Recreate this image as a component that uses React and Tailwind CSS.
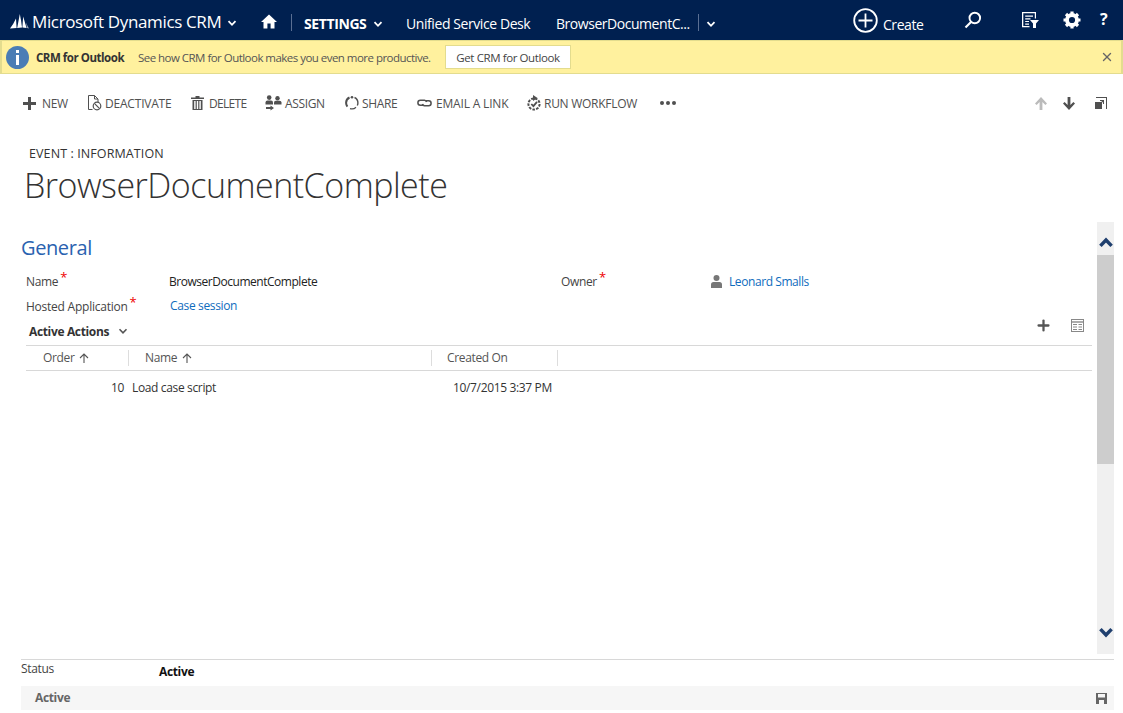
import { Plus, X } from "lucide-react";

const fontStack = { fontFamily: '"Open Sans", "Noto Sans", sans-serif' };

function Chevron({ className = "", size = 10, color = "#fff", sw = 1.8 }) {
  return (
    <svg width={size} height={size} viewBox="0 0 10 10" className={className}>
      <path d="M1.5 3.2 L5 6.8 L8.5 3.2" fill="none" stroke={color} strokeWidth={sw} />
    </svg>
  );
}

function Logo() {
  return (
    <svg width="19" height="15" viewBox="0 0 19 15" fill="#fff">
      <path d="M0 14.5 Q3.5 10 6 4.5 L6.6 14 Z" />
      <path d="M7.2 14 Q8.5 7 9.8 0 Q11.2 6 12 13.6 Z" />
      <path d="M12.4 13.6 Q12.8 7 13.2 2.5 Q15 9 16.6 14 Z" />
      <path d="M16 8.5 Q17.5 12 19 14.5 L17 14 Z" fillOpacity="0.6" />
    </svg>
  );
}

function HomeIcon() {
  return (
    <svg width="16" height="15" viewBox="0 0 16 15" fill="#fff">
      <path d="M8 0.5 L16 8 L13.5 8 L13.5 14.5 L9.6 14.5 L9.6 9.5 L6.4 9.5 L6.4 14.5 L2.5 14.5 L2.5 8 L0 8 Z" />
    </svg>
  );
}

function CreateIcon() {
  return (
    <svg width="25" height="25" viewBox="0 0 25 25" fill="none" stroke="#fff">
      <circle cx="12.5" cy="12.5" r="11.3" strokeWidth="1.8" />
      <path d="M12.5 5.5 V19.5 M5.5 12.5 H19.5" strokeWidth="1.8" />
    </svg>
  );
}

function SearchIcon() {
  return (
    <svg width="18" height="18" viewBox="0 0 18 18" fill="none" stroke="#fff">
      <circle cx="10.8" cy="7" r="5.3" strokeWidth="1.9" />
      <path d="M7 11 L1.5 16.5" strokeWidth="2.2" />
    </svg>
  );
}

function AdvancedFindIcon() {
  return (
    <svg width="17" height="16" viewBox="0 0 17 16" fill="#fff">
      <path d="M0 0 H14 V6.5 H12.8 V1.3 H1.3 V14 H7.5 V15.3 H0 Z" />
      <path d="M3.2 3.5 H11 V4.7 H3.2 Z M3.2 6.2 H8.5 V7.4 H3.2 Z M3.2 8.9 H7 V10.1 H3.2 Z M3.2 11.6 H7 V12.8 H3.2 Z" />
      <path d="M8 8 H17 L14 11.5 V16 H11 V11.5 Z" />
    </svg>
  );
}

function GearIcon({ color = "#fff" }) {
  return (
    <svg width="18" height="18" viewBox="0 0 18 18">
      <circle cx="9" cy="9" r="5" fill="none" stroke={color} strokeWidth="3.8" />
      <path
        d="M9 0.5 V3 M9 15 V17.5 M0.5 9 H3 M15 9 H17.5 M3 3 L4.8 4.8 M13.2 13.2 L15 15 M15 3 L13.2 4.8 M4.8 13.2 L3 15"
        stroke={color}
        strokeWidth="3.2"
      />
    </svg>
  );
}

function InfoIcon() {
  return (
    <svg width="23" height="23" viewBox="0 0 23 23">
      <circle cx="11.5" cy="11.5" r="11.5" fill="#4a7db5" />
      <rect x="10" y="4" width="3" height="3" fill="#fff" />
      <rect x="10" y="9" width="3" height="10" fill="#fff" />
    </svg>
  );
}

const iconGray = "#505050";

function NewIcon() {
  return (
    <svg width="13" height="13" viewBox="0 0 13 13" fill={iconGray}>
      <path d="M5 0 H8 V5 H13 V8 H8 V13 H5 V8 H0 V5 H5 Z" />
    </svg>
  );
}

function DeactivateIcon() {
  return (
    <svg width="14" height="16" viewBox="0 0 14 16" fill="none" stroke={iconGray} strokeWidth="1">
      <path d="M4.5 14.5 H0.5 V0.5 H6.5 L10 4 V7 M6.5 0.5 V4 H10" />
      <circle cx="9" cy="11" r="3.8" strokeWidth="1.2" />
      <path d="M6.4 8.4 L11.6 13.6" strokeWidth="1.2" />
    </svg>
  );
}

function DeleteIcon() {
  return (
    <svg width="13" height="14" viewBox="0 0 13 14" fill={iconGray}>
      <path d="M0 1.5 H13 V3 H0 Z M4.5 0 H8.5 V1.5 H4.5 Z" />
      <path d="M1.5 4 H11.5 V14 H1.5 Z M3.2 5 V13 H4.6 V5 Z M5.8 5 V13 H7.2 V5 Z M8.4 5 V13 H9.8 V5 Z" fillRule="evenodd" />
    </svg>
  );
}

function AssignIcon() {
  return (
    <svg width="17" height="16" viewBox="0 0 17 16" fill={iconGray}>
      <circle cx="4.2" cy="2.6" r="2.3" />
      <path d="M0.5 9.5 V7.5 Q0.5 5.5 2.5 5.5 H6 Q8 5.5 8 7.5 V9.5 Z" />
      <circle cx="12.5" cy="3.2" r="2.2" />
      <path d="M9 9.5 V7.5 Q9 5.8 10.8 5.8 H14.5 Q16.5 5.8 16.5 7.5 V9.5 Z" />
      <path d="M1 12 H5.5 V10.4 L9 12.9 L5.5 15.5 V13.9 H1 Z" />
    </svg>
  );
}

function ShareIcon() {
  return (
    <svg width="14" height="14" viewBox="0 0 14 14" fill="none" stroke={iconGray}>
      <path d="M4.5 1.5 A5.9 5.9 0 0 0 1.1 7 A5.9 5.9 0 0 0 2.4 10.6" strokeWidth="2" />
      <path d="M5 12.6 A5.9 5.9 0 0 0 11 11.3" strokeWidth="1.2" />
      <path d="M9.5 1.5 A5.9 5.9 0 0 1 12.9 7 A5.9 5.9 0 0 1 12.3 9.5" strokeWidth="1.4" />
      <circle cx="7" cy="1.3" r="1.3" fill={iconGray} stroke="none" />
    </svg>
  );
}

function LinkIcon() {
  return (
    <svg width="15" height="8" viewBox="0 0 15 8" fill="none" stroke={iconGray} strokeWidth="1.5">
      <path d="M6.5 6.2 H3.4 A2.4 2.4 0 0 1 3.4 1.2 H7.5 A2.4 2.4 0 0 1 9.6 3" />
      <path d="M8.5 1.8 H11.6 A2.4 2.4 0 0 1 11.6 6.8 H7.5 A2.4 2.4 0 0 1 5.4 5" />
    </svg>
  );
}

function WorkflowIcon() {
  return (
    <svg width="14" height="16" viewBox="0 0 14 16" fill="none" stroke={iconGray}>
      <circle cx="7" cy="9" r="5.6" strokeWidth="2" strokeDasharray="2.6 1.2" />
      <path d="M6 0 L10.5 3 L6 6 Z" fill={iconGray} stroke="none" />
      <path d="M4.3 9 L6.4 11.2 L10 6.9" strokeWidth="1.8" />
    </svg>
  );
}

function ArrowIcon({ up = false, color = iconGray }) {
  return (
    <svg width="12" height="13" viewBox="0 0 12 13" fill={color} className={up ? "" : "rotate-180"}>
      <path d="M6 0 L12 6.5 L10.4 8 L7.4 5 V13 H4.6 V5 L1.6 8 L0 6.5 Z" />
    </svg>
  );
}

function PopoutIcon() {
  return (
    <svg width="12" height="12" viewBox="0 0 12 12" fill={iconGray}>
      <path d="M1 0 H12 V12 H11 V1 H1 Z" />
      <path d="M0 5 H7 V12 H0 Z" />
      <path d="M5 3 H9 V7 H8 V4.8 L6.2 6.6 L5.4 5.8 L7.2 4 H5 Z" />
    </svg>
  );
}

function SortArrow() {
  return (
    <svg width="10" height="10" viewBox="0 0 10 10" fill="none" stroke="#555" strokeWidth="1.1">
      <path d="M5 10 V1 M1 5 L5 1 L9 5" />
    </svg>
  );
}

function GridIcon() {
  return (
    <svg width="13" height="13" viewBox="0 0 13 13" fill="none" stroke="#888">
      <rect x="0.5" y="0.5" width="12" height="12" />
      <path d="M0.5 3 H12.5" strokeWidth="1.4" />
      <path d="M2 5.5 H6 M7.5 5.5 H11 M2 8 H6 M7.5 8 H11 M2 10.5 H6 M7.5 10.5 H11" />
    </svg>
  );
}

function SaveIcon() {
  return (
    <svg width="11" height="11" viewBox="0 0 11 11" fill="#666">
      <path d="M0 0 H11 V11 H0 Z M2 1 V4.5 H9 V1 Z M3 7 V11 H8 V7 Z" fillRule="evenodd" />
    </svg>
  );
}

function PersonIcon() {
  return (
    <svg width="11" height="13" viewBox="0 0 11 13" fill="#777">
      <circle cx="5.5" cy="3" r="3" />
      <path d="M0 13 V9.5 Q0 7 2.5 7 H8.5 Q11 7 11 9.5 V13 Z" />
    </svg>
  );
}

const commands = [
  { label: "NEW", icon: <NewIcon />, cls: "w-[65px]", iconCls: "w-[19px]", track: "" },
  { label: "DEACTIVATE", icon: <DeactivateIcon />, cls: "w-[103px]", iconCls: "w-[17px]", track: "tracking-[-0.2px]" },
  { label: "DELETE", icon: <DeleteIcon />, cls: "w-[74px]", iconCls: "w-[18px]", track: "tracking-[-0.7px]" },
  { label: "ASSIGN", icon: <AssignIcon />, cls: "w-[80px]", iconCls: "w-[20px]", track: "" },
  { label: "SHARE", icon: <ShareIcon />, cls: "w-[72px]", iconCls: "w-[17px]", track: "" },
  { label: "EMAIL A LINK", icon: <LinkIcon />, cls: "w-[110px]", iconCls: "w-[19px]", track: "tracking-[-0.18px]" },
  { label: "RUN WORKFLOW", icon: <WorkflowIcon />, cls: "w-[133px]", iconCls: "w-[17px]", track: "tracking-[-0.28px]" },
];

function Required() {
  return <span className="text-[#e00] text-[13px] leading-none ml-[2px] relative -top-[4px]">*</span>;
}

export default function App() {
  return (
    <div style={fontStack} className="w-[1123px] h-[713px] overflow-hidden bg-white flex flex-col text-[12px] tracking-[-0.35px] text-[#444]">
      {/* top nav */}
      <div className="h-10 shrink-0 bg-[#002050] flex items-center text-white">
        <div className="ml-[10px] w-[22px] mt-[2px]"><Logo /></div>
        <span className="w-[195px] text-[17px] tracking-[-0.36px] whitespace-nowrap mt-[4px]">Microsoft Dynamics CRM</span>
        <Chevron className="mt-[6px]" />
        <div className="ml-[24px] mt-[2px]"><HomeIcon /></div>
        <div className="ml-[14px] w-px h-[17px] mt-[4px] bg-[#5a6f93]" />
        <span className="ml-[12px] w-[69px] text-[14px] font-bold tracking-[-0.4px] mt-[7px]">SETTINGS</span>
        <Chevron className="mt-[7px]" />
        <span className="ml-[23px] w-[150px] text-[14px] tracking-[-0.42px] whitespace-nowrap mt-[7px]">Unified Service Desk</span>
        <span className="w-[142px] text-[14px] tracking-[-0.46px] whitespace-nowrap mt-[7px]">BrowserDocumentC...</span>
        <div className="w-px h-[17px] mt-[4px] bg-[#5a6f93]" />
        <Chevron className="ml-[7px] mt-[7px]" />
        <div className="ml-[137px]"><CreateIcon /></div>
        <span className="ml-[5px] w-[81px] text-[14px] tracking-[-0.45px] mt-[8px]">Create</span>
        <SearchIcon />
        <div className="ml-[40px]"><AdvancedFindIcon /></div>
        <div className="ml-[24px]"><GearIcon /></div>
        <span className="ml-[19px] text-[16px] font-bold -mt-[3px]">?</span>
      </div>

      {/* notification bar */}
      <div className="h-[34px] shrink-0 bg-[#fff19e] border-x-2 border-y border-[#e3dc8e] flex items-center">
        <div className="ml-[4px]"><InfoIcon /></div>
        <span className="ml-[7px] w-[102px] font-bold text-[#333] text-[11.5px] tracking-[-0.47px] whitespace-nowrap mt-[1px]">CRM for Outlook</span>
        <span className="w-[307px] text-[11.5px] tracking-[-0.53px] text-[#555] whitespace-nowrap mt-[1px]">See how CRM for Outlook makes you even more productive.</span>
        <div className="w-[126px] h-[24px] bg-white border border-[#e3dc8e] flex items-center justify-center text-[#444] text-[11.5px] tracking-[-0.4px]"><span className="mt-[1px]">Get CRM for Outlook</span></div>
        <X size={14} strokeWidth={2.4} color="#666" className="ml-auto mr-[7px]" />
      </div>

      {/* command bar */}
      <div className="h-[58px] shrink-0 flex items-center pl-[23px] pr-[16px] text-[#505050]">
        {commands.map((c) => (
          <div key={c.label} className={`${c.cls} flex items-center whitespace-nowrap`}>
            <div className={`${c.iconCls} shrink-0 flex justify-start`}>{c.icon}</div>
            <span className={`${c.track} mt-[1px]`}>{c.label}</span>
          </div>
        ))}
        <div className="flex gap-[2px]">
          <span className="w-1 h-1 rounded-full bg-[#505050]" />
          <span className="w-1 h-1 rounded-full bg-[#505050]" />
          <span className="w-1 h-1 rounded-full bg-[#505050]" />
        </div>
        <div className="ml-auto flex items-center gap-4">
          <ArrowIcon up color="#bbb" />
          <ArrowIcon />
          <div className="ml-1"><PopoutIcon /></div>
        </div>
      </div>

      {/* record title */}
      <div className="shrink-0 pl-[29px] pt-[14px] text-[12.5px] tracking-[0.1px] text-[#333] leading-[16px] whitespace-nowrap">EVENT : INFORMATION</div>
      <h1 className="shrink-0 pl-[24px] -mt-[2px] text-[34px] font-light tracking-[-0.5px] leading-[50px] text-[#333] whitespace-nowrap">BrowserDocumentComplete</h1>

      {/* form area */}
      <div className="flex-1 min-h-0 mt-[11px] flex pl-[21px] pr-[9px]">
        <div className="flex-1 min-w-0">
          <h2 className="text-[20px] tracking-[-0.4px] leading-[30px] mt-[12px] text-[#2a62b0]">General</h2>
          <div className="mt-[6px] pl-[5px] grid grid-cols-[144px_391px_150px_1fr] auto-rows-[25px] items-center">
            <div>Name<Required /></div>
            <div className="text-[#222] tracking-[-0.47px] -ml-px">BrowserDocumentComplete</div>
            <div>Owner<Required /></div>
            <div className="flex items-center text-[#0f6cbd]">
              <PersonIcon />
              <span className="ml-[7px] tracking-[-0.42px]">Leonard Smalls</span>
            </div>
            <div className="whitespace-nowrap tracking-[-0.24px]">Hosted Application<Required /></div>
            <div className="text-[#0f6cbd] -mt-[2px]">Case session</div>
          </div>
          <div className="h-[25px] pl-[8px] flex items-center">
            <span className="font-bold text-[#333]">Active Actions</span>
            <Chevron className="ml-[9px] -mt-px" color="#555" sw={1.6} />
            <Plus size={17} strokeWidth={3.2} color="#555" className="ml-auto -mt-[12px]" />
            <div className="ml-[19px] mr-[13px] -mt-[12px]"><GridIcon /></div>
          </div>
          {/* sub-grid */}
          <div className="ml-[5px] mr-[5px] h-[26px] mt-[1px] border-y border-[#d8d8d8] flex items-center text-[#555]">
            <div className="w-[103px] h-[16px] pl-[17px] border-r border-[#ddd] flex items-center gap-[5px]">Order <SortArrow /></div>
            <div className="w-[303px] h-[16px] pl-[16px] border-r border-[#ddd] flex items-center gap-[5px]">Name <SortArrow /></div>
            <div className="w-[126px] h-[16px] pl-[15px] border-r border-[#ddd] flex items-center">Created On</div>
          </div>
          <div className="ml-[5px] h-[34px] flex items-center text-[#333]">
            <div className="w-[98px] text-right">10</div>
            <div className="ml-[8px] w-[321px]">Load case script</div>
            <div>10/7/2015 3:37 PM</div>
          </div>
        </div>

        {/* scrollbar */}
        <div className="w-[17px] shrink-0 mt-px h-[432px] bg-[#f0f0f0] flex flex-col">
          <div className="h-[33px] pt-[13px] flex justify-center">
            <Chevron size={16} color="#1f3f6e" sw={2.2} className="rotate-180" />
          </div>
          <div className="h-[209px] bg-[#cdcdcd]" />
          <div className="mt-auto h-[33px] pt-[3px] flex justify-center">
            <Chevron size={16} color="#1f3f6e" sw={2.2} />
          </div>
        </div>
      </div>

      {/* footer */}
      <div className="shrink-0 ml-[21px] mr-[9px] h-[27px] border-t border-[#d8d8d8] flex">
        <span className="w-[138px] leading-[18px]">Status</span>
        <span className="mt-[3px] leading-[18px] font-bold text-[#111]">Active</span>
      </div>
      <div className="shrink-0 ml-[21px] mr-[9px] mb-[3px] h-[24px] bg-[#f6f6f6] flex items-center pl-[14px] pr-[7px]">
        <span className="font-bold text-[#666]">Active</span>
        <div className="ml-auto"><SaveIcon /></div>
      </div>
    </div>
  );
}
